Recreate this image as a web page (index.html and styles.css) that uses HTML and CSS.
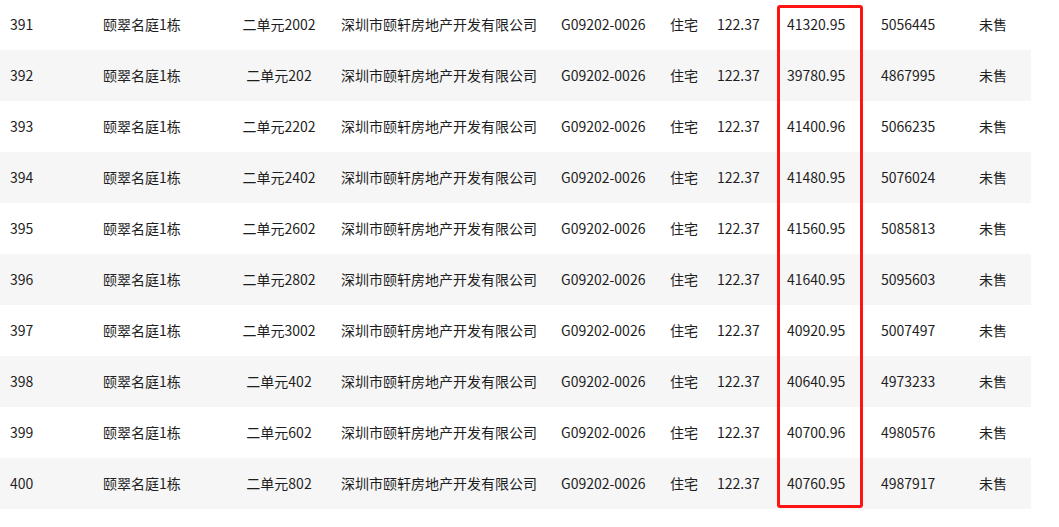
FILE: index.html
```html
<!DOCTYPE html>
<html lang="zh-CN">
<head>
    <meta charset="UTF-8">
    <meta name="viewport" content="width=device-width, initial-scale=1.0">
    <title>一房一价</title>
    <link rel="stylesheet" href="styles.css">
</head>
<body>
    <div class="wrap">
        <table class="price-table">
            <colgroup>
                <col class="c-no">
                <col class="c-building">
                <col class="c-room">
                <col class="c-company">
                <col class="c-permit">
                <col class="c-use">
                <col class="c-area">
                <col class="c-unit">
                <col class="c-total">
                <col class="c-status">
            </colgroup>
            <tbody>
                <tr><td>391</td><td>颐翠名庭1栋</td><td class="center">二单元2002</td><td>深圳市颐轩房地产开发有限公司</td><td>G09202-0026</td><td>住宅</td><td>122.37</td><td>41320.95</td><td>5056445</td><td>未售</td></tr>
                <tr><td>392</td><td>颐翠名庭1栋</td><td class="center">二单元202</td><td>深圳市颐轩房地产开发有限公司</td><td>G09202-0026</td><td>住宅</td><td>122.37</td><td>39780.95</td><td>4867995</td><td>未售</td></tr>
                <tr><td>393</td><td>颐翠名庭1栋</td><td class="center">二单元2202</td><td>深圳市颐轩房地产开发有限公司</td><td>G09202-0026</td><td>住宅</td><td>122.37</td><td>41400.96</td><td>5066235</td><td>未售</td></tr>
                <tr><td>394</td><td>颐翠名庭1栋</td><td class="center">二单元2402</td><td>深圳市颐轩房地产开发有限公司</td><td>G09202-0026</td><td>住宅</td><td>122.37</td><td>41480.95</td><td>5076024</td><td>未售</td></tr>
                <tr><td>395</td><td>颐翠名庭1栋</td><td class="center">二单元2602</td><td>深圳市颐轩房地产开发有限公司</td><td>G09202-0026</td><td>住宅</td><td>122.37</td><td>41560.95</td><td>5085813</td><td>未售</td></tr>
                <tr><td>396</td><td>颐翠名庭1栋</td><td class="center">二单元2802</td><td>深圳市颐轩房地产开发有限公司</td><td>G09202-0026</td><td>住宅</td><td>122.37</td><td>41640.95</td><td>5095603</td><td>未售</td></tr>
                <tr><td>397</td><td>颐翠名庭1栋</td><td class="center">二单元3002</td><td>深圳市颐轩房地产开发有限公司</td><td>G09202-0026</td><td>住宅</td><td>122.37</td><td>40920.95</td><td>5007497</td><td>未售</td></tr>
                <tr><td>398</td><td>颐翠名庭1栋</td><td class="center">二单元402</td><td>深圳市颐轩房地产开发有限公司</td><td>G09202-0026</td><td>住宅</td><td>122.37</td><td>40640.95</td><td>4973233</td><td>未售</td></tr>
                <tr><td>399</td><td>颐翠名庭1栋</td><td class="center">二单元602</td><td>深圳市颐轩房地产开发有限公司</td><td>G09202-0026</td><td>住宅</td><td>122.37</td><td>40700.96</td><td>4980576</td><td>未售</td></tr>
                <tr><td>400</td><td>颐翠名庭1栋</td><td class="center">二单元802</td><td>深圳市颐轩房地产开发有限公司</td><td>G09202-0026</td><td>住宅</td><td>122.37</td><td>40760.95</td><td>4987917</td><td>未售</td></tr>
            </tbody>
        </table>

        <!-- red annotation round the unit price column -->
        <div class="mark"></div>
    </div>
</body>
</html>
```

FILE: styles.css
```css
body {
    margin: 0;
    padding: 0;
    background-color: #fff;
    font-family: "Noto Sans CJK SC", "Noto Sans", sans-serif;
    font-size: 14px;
    color: #1e1e1e;
}

.wrap {
    position: relative;
    width: 1059px;
    height: 527px;
    overflow: hidden;
}

.price-table {
    border-collapse: collapse;
    table-layout: fixed;
    width: 1031px;
    margin-top: -1px;
}

.c-no { width: 93px; }
.c-building { width: 134px; }
.c-room { width: 104px; }
.c-company { width: 220px; }
.c-permit { width: 109px; }
.c-use { width: 47px; }
.c-area { width: 70px; }
.c-unit { width: 94px; }
.c-total { width: 98px; }
.c-status { width: 62px; }

.price-table td {
    height: 51px;
    box-sizing: border-box;
    padding: 0 0 2px 10px;
    text-align: left;
    white-space: nowrap;
    line-height: 20px;
}

.price-table td.center {
    padding: 0 0 2px 0;
    text-align: center;
}

.price-table tr:nth-child(even) {
    background-color: #f6f6f6;
}

.mark {
    position: absolute;
    left: 777px;
    top: 5px;
    width: 80px;
    height: 497px;
    border: 3px solid #ff1414;
    border-radius: 3px;
}
```
